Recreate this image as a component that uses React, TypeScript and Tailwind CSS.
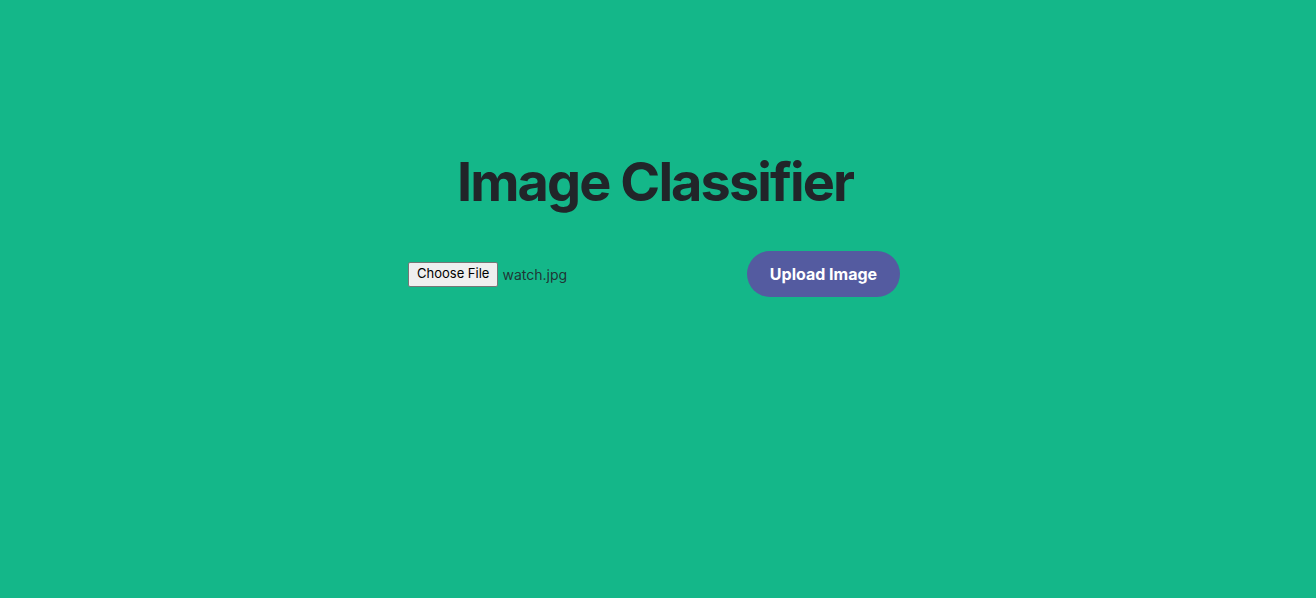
export default function App() {
  return (
    <div className="min-h-[598px] w-full bg-[#14b789] flex flex-col items-center" style={{ fontFamily: 'Inter, "Noto Sans", sans-serif' }}>
      <h1 className="mt-[148px] text-[54px] leading-[68px] font-bold tracking-[-1.9px] text-[#212529] ml-[-6px]">Image Classifier</h1>
      <div className="mt-[35px] w-[492px] flex items-center justify-between ml-[-8px]">
        <div className="flex items-center text-[14px] text-[#212529]/90">
          <span className="inline-flex items-center h-[25px] px-[8px] bg-[#efefef] border border-[#767676] rounded-[2px] text-[13px] text-black">Choose File</span>
          <span className="ml-[4px]">watch.jpg</span>
        </div>
        <button className="h-[46px] w-[153px] rounded-full bg-[#545ba0] text-white font-bold text-[16px] tracking-[0px]">Upload Image</button>
      </div>
    </div>
  );
}
